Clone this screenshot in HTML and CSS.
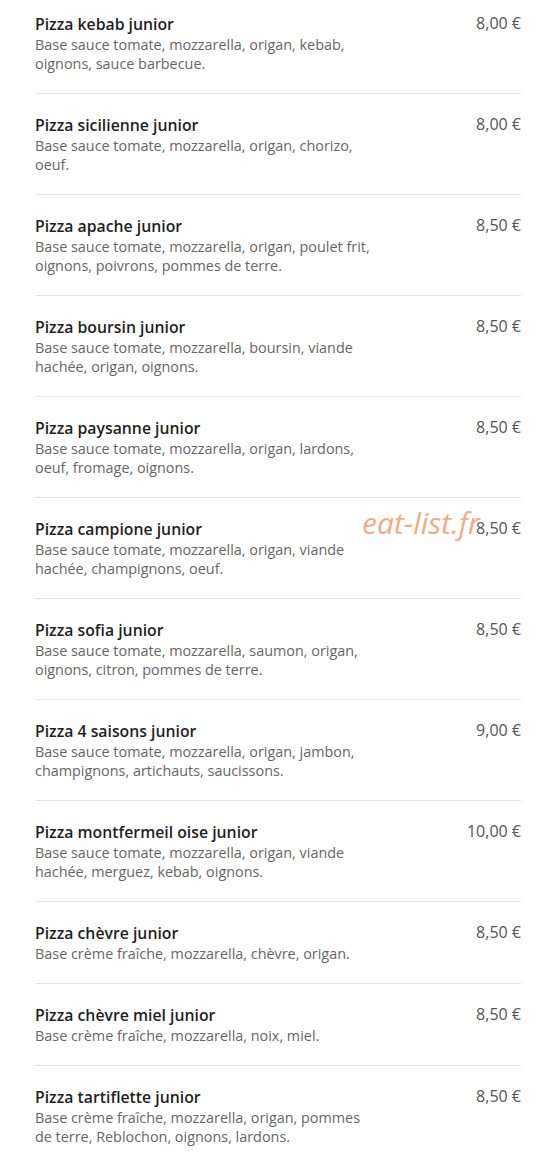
FILE: index.html
```html
<!DOCTYPE html>
<html lang="fr">
<head>
    <meta charset="UTF-8">
    <meta name="viewport" content="width=device-width, initial-scale=1.0">
    <title>Pizzas junior</title>
    <link rel="stylesheet" href="styles.css">
</head>
<body>
    <div class="menu">
        <div class="item">
            <div class="info">
                <div class="name">Pizza kebab junior</div>
                <div class="desc">Base sauce tomate, mozzarella, origan, kebab, oignons, sauce barbecue.</div>
            </div>
            <div class="price">8,00 €</div>
        </div>
        <div class="item">
            <div class="info">
                <div class="name">Pizza sicilienne junior</div>
                <div class="desc">Base sauce tomate, mozzarella, origan, chorizo, oeuf.</div>
            </div>
            <div class="price">8,00 €</div>
        </div>
        <div class="item">
            <div class="info">
                <div class="name">Pizza apache junior</div>
                <div class="desc">Base sauce tomate, mozzarella, origan, poulet frit, oignons, poivrons, pommes de terre.</div>
            </div>
            <div class="price">8,50 €</div>
        </div>
        <div class="item">
            <div class="info">
                <div class="name">Pizza boursin junior</div>
                <div class="desc">Base sauce tomate, mozzarella, boursin, viande hachée, origan, oignons.</div>
            </div>
            <div class="price">8,50 €</div>
        </div>
        <div class="item">
            <div class="info">
                <div class="name">Pizza paysanne junior</div>
                <div class="desc">Base sauce tomate, mozzarella, origan, lardons, oeuf, fromage, oignons.</div>
            </div>
            <div class="price">8,50 €</div>
        </div>
        <div class="item">
            <div class="info">
                <div class="name">Pizza campione junior</div>
                <div class="desc">Base sauce tomate, mozzarella, origan, viande hachée, champignons, oeuf.</div>
            </div>
            <div class="price">8,50 €</div>
            <div class="watermark">eat-list.fr</div>
        </div>
        <div class="item">
            <div class="info">
                <div class="name">Pizza sofia junior</div>
                <div class="desc">Base sauce tomate, mozzarella, saumon, origan, oignons, citron, pommes de terre.</div>
            </div>
            <div class="price">8,50 €</div>
        </div>
        <div class="item">
            <div class="info">
                <div class="name">Pizza 4 saisons junior</div>
                <div class="desc">Base sauce tomate, mozzarella, origan, jambon, champignons, artichauts, saucissons.</div>
            </div>
            <div class="price">9,00 €</div>
        </div>
        <div class="item">
            <div class="info">
                <div class="name">Pizza montfermeil oise junior</div>
                <div class="desc">Base sauce tomate, mozzarella, origan, viande hachée, merguez, kebab, oignons.</div>
            </div>
            <div class="price">10,00 €</div>
        </div>
        <div class="item">
            <div class="info">
                <div class="name">Pizza chèvre junior</div>
                <div class="desc">Base crème fraîche, mozzarella, chèvre, origan.</div>
            </div>
            <div class="price">8,50 €</div>
        </div>
        <div class="item">
            <div class="info">
                <div class="name">Pizza chèvre miel junior</div>
                <div class="desc">Base crème fraîche, mozzarella, noix, miel.</div>
            </div>
            <div class="price">8,50 €</div>
        </div>
        <div class="item">
            <div class="info">
                <div class="name">Pizza tartiflette junior</div>
                <div class="desc">Base crème fraîche, mozzarella, origan, pommes de terre, Reblochon, oignons, lardons.</div>
            </div>
            <div class="price">8,50 €</div>
        </div>
    </div>
</body>
</html>
```

FILE: styles.css
```css
body {
    margin: 0;
    background-color: #ffffff;
    font-family: "Open Sans", Arial, sans-serif;
}
.menu {
    padding: 0 31px 0 35px;
    margin-top: -8px;
}
.item {
    position: relative;
    display: flex;
    justify-content: space-between;
    align-items: flex-start;
    padding: 20px 0;
    border-top: 1px solid #e6e6e6;
}
.item:first-child {
    border-top-color: transparent;
}
.info {
    width: 70%;
}
.name {
    font-size: 15.8px;
    font-weight: 600;
    line-height: 22px;
    color: #1f1f1f;
}
.desc {
    font-size: 14.4px;
    line-height: 19px;
    color: #666666;
}
.price {
    font-size: 16px;
    font-weight: 500;
    line-height: 21px;
    color: #555555;
}
.watermark {
    position: absolute;
    left: 327px;
    top: 4px;
    font-size: 30px;
    font-style: italic;
    color: #f2a27b;
    opacity: 0.9;
}
```
